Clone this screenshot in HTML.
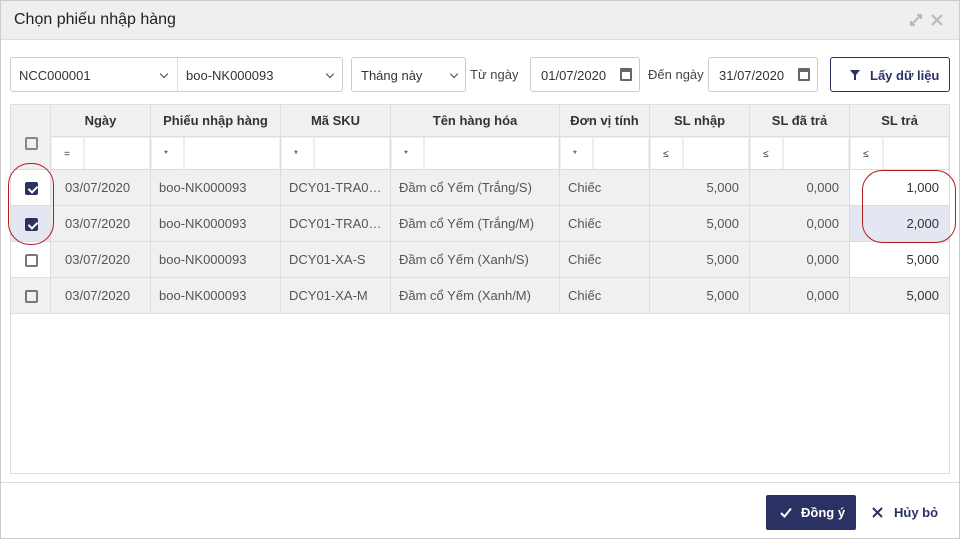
<!DOCTYPE html>
<html><head><meta charset="utf-8"><style>
*{box-sizing:border-box;margin:0;padding:0}
body{width:960px;height:539px;background:#fff;font-family:"Liberation Sans",sans-serif;font-size:13px;color:#333;position:relative;overflow:hidden}
.abs{position:absolute}
.frame{left:0;top:0;width:960px;height:539px;border:1px solid #ccc;pointer-events:none}
.title{left:0;top:0;width:960px;height:40px;background:#efefef;border-bottom:1px solid #ddd}
.title span{position:absolute;left:14px;top:11px;font-size:16px;color:#222}
.box{border:1px solid #ccc;border-radius:3px;background:#fff;height:35px;top:57px}
.box span{position:absolute;top:10px;font-size:13px;color:#333}
.chev{position:absolute;top:13px;width:6px;height:6px;border-right:1.5px solid #444;border-bottom:1.5px solid #444;transform:rotate(45deg)}
.lbl{top:67px;color:#444}
.cal{position:absolute;top:10px;width:12px;height:13px;border:2px solid #666;border-top-width:4px;border-radius:1px}
table{position:absolute;left:10px;top:104px;border-collapse:collapse;table-layout:fixed}
td,th{border:1px solid #ddd;height:36px;padding:0 8px;white-space:nowrap;overflow:hidden}
th{background:#f0f0f0;font-weight:bold;height:32px;color:#333}
tr.f td{background:#f0f0f0;height:33px;padding:1px 1px 0;vertical-align:top}
.fi{display:flex;height:31px}
.fi b{width:33px;background:#fff;font-weight:normal;font-size:10px;padding:11px 0 0 12px;border-right:2px solid #eee}
.fi i{flex:1;background:#fff}
tr.d td{background:#f0f0f0;color:#555}
td.r{text-align:right;padding-right:10px}
td.w{background:#fff!important;color:#333!important}
td.s{background:#e4e6f1!important}
.cb{display:inline-block;width:13px;height:13px;border:2px solid #777;border-radius:2px;vertical-align:middle;margin-left:6px}
.cb.on{background:#2c3163;border-color:#2c3163;position:relative}
.cb.on:after{content:"";position:absolute;left:2.5px;top:0px;width:4px;height:7px;border-right:2px solid #fff;border-bottom:2px solid #fff;transform:rotate(45deg)}
.oval{border:1.5px solid #b01b1b;border-radius:22px}
</style></head><body>
<div class="abs title"><span>Chọn phiếu nhập hàng</span>
<svg class="abs" style="left:909px;top:13px" width="14" height="14"><path d="M2 12L12 2M8 2h4v4M2 8v4h4" stroke="#bbb" stroke-width="2" fill="none"/></svg>
<svg class="abs" style="left:931px;top:14px" width="12" height="12"><path d="M1 1L11 11M11 1L1 11" stroke="#bbb" stroke-width="2.2"/></svg>
</div>
<div class="abs box" style="left:10px;width:333px"><span style="left:8px">NCC000001</span><div class="chev" style="left:150px"></div><div class="abs" style="left:166px;top:0;width:1px;height:33px;background:#ddd"></div><span style="left:175px">boo-NK000093</span><div class="chev" style="left:316px"></div></div>
<div class="abs box" style="left:351px;width:115px"><span style="left:9px">Tháng này</span><div class="chev" style="left:99px"></div></div>
<div class="abs lbl" style="left:470px">Từ ngày</div>
<div class="abs box" style="left:530px;width:110px"><span style="left:10px">01/07/2020</span><div class="cal" style="left:89px"></div></div>
<div class="abs lbl" style="left:648px">Đến ngày</div>
<div class="abs box" style="left:708px;width:110px"><span style="left:10px">31/07/2020</span><div class="cal" style="left:89px"></div></div>
<div class="abs box" style="left:830px;width:120px;border-color:#2c3163"><svg class="abs" style="left:19px;top:12px" width="10" height="10"><path d="M0 0h10L6 5v5H4V5z" fill="#2c3163"/></svg><span style="left:39px;font-weight:bold;color:#2c3163">Lấy dữ liệu</span></div>
<div class="abs" style="left:10px;top:104px;width:940px;height:370px;border:1px solid #ddd"></div>
<table>
<colgroup><col style="width:40px"><col style="width:100px"><col style="width:130px"><col style="width:110px"><col style="width:169px"><col style="width:90px"><col style="width:100px"><col style="width:100px"><col style="width:100px"></colgroup>
<tr><th rowspan="2" style="background:#f0f0f0;padding:10px 0 0 8px;height:65px;text-align:left"><span class="cb" style="border-color:#888"></span></th><th>Ngày</th><th>Phiếu nhập hàng</th><th>Mã SKU</th><th>Tên hàng hóa</th><th>Đơn vị tính</th><th>SL nhập</th><th>SL đã trả</th><th>SL trả</th></tr>
<tr class="f"><td><div class="fi"><b>=</b><i></i></div></td><td><div class="fi"><b>*</b><i></i></div></td><td><div class="fi"><b>*</b><i></i></div></td><td><div class="fi"><b>*</b><i></i></div></td><td><div class="fi"><b>*</b><i></i></div></td><td><div class="fi"><b>≤</b><i></i></div></td><td><div class="fi"><b>≤</b><i></i></div></td><td><div class="fi"><b>≤</b><i></i></div></td></tr>
<tr class="d"><td class="w" style="padding-left:8px"><span class="cb on"></span></td><td style="padding-left:14px">03/07/2020</td><td>boo-NK000093</td><td>DCY01-TRA0…</td><td>Đầm cổ Yếm (Trắng/S)</td><td>Chiếc</td><td class="r">5,000</td><td class="r">0,000</td><td class="r w">1,000</td></tr>
<tr class="d" style="border-bottom:1px solid #f5dc9a"><td class="s" style="padding-left:8px"><span class="cb on"></span></td><td style="padding-left:14px">03/07/2020</td><td>boo-NK000093</td><td>DCY01-TRA0…</td><td>Đầm cổ Yếm (Trắng/M)</td><td>Chiếc</td><td class="r">5,000</td><td class="r">0,000</td><td class="r s" style="color:#333">2,000</td></tr>
<tr class="d"><td class="w" style="padding-left:8px"><span class="cb"></span></td><td style="padding-left:14px">03/07/2020</td><td>boo-NK000093</td><td>DCY01-XA-S</td><td>Đầm cổ Yếm (Xanh/S)</td><td>Chiếc</td><td class="r">5,000</td><td class="r">0,000</td><td class="r w">5,000</td></tr>
<tr class="d"><td style="padding-left:8px"><span class="cb"></span></td><td style="padding-left:14px">03/07/2020</td><td>boo-NK000093</td><td>DCY01-XA-M</td><td>Đầm cổ Yếm (Xanh/M)</td><td>Chiếc</td><td class="r">5,000</td><td class="r">0,000</td><td class="r" style="color:#333">5,000</td></tr>
</table>
<div class="abs oval" style="left:8px;top:163px;width:46px;height:82px"></div>
<div class="abs oval" style="left:862px;top:170px;width:94px;height:73px;border-radius:20px"></div>
<div class="abs" style="left:0;top:482px;width:960px;height:1px;background:#ddd"></div>
<div class="abs" style="left:766px;top:495px;width:90px;height:35px;background:#2c3163;border-radius:2px;color:#fff;font-weight:bold">
<svg class="abs" style="left:14px;top:12px" width="12" height="11"><path d="M1 6l3.5 3.5L11 1.5" stroke="#fff" stroke-width="2" fill="none"/></svg><span class="abs" style="left:35px;top:10px">Đồng ý</span></div>
<svg class="abs" style="left:872px;top:507px" width="11" height="11"><path d="M1 1L10 10M10 1L1 10" stroke="#2c3163" stroke-width="2"/></svg>
<span class="abs" style="left:894px;top:505px;font-weight:bold;color:#2c3163">Hủy bỏ</span>
<div class="abs frame"></div>
</body></html>
